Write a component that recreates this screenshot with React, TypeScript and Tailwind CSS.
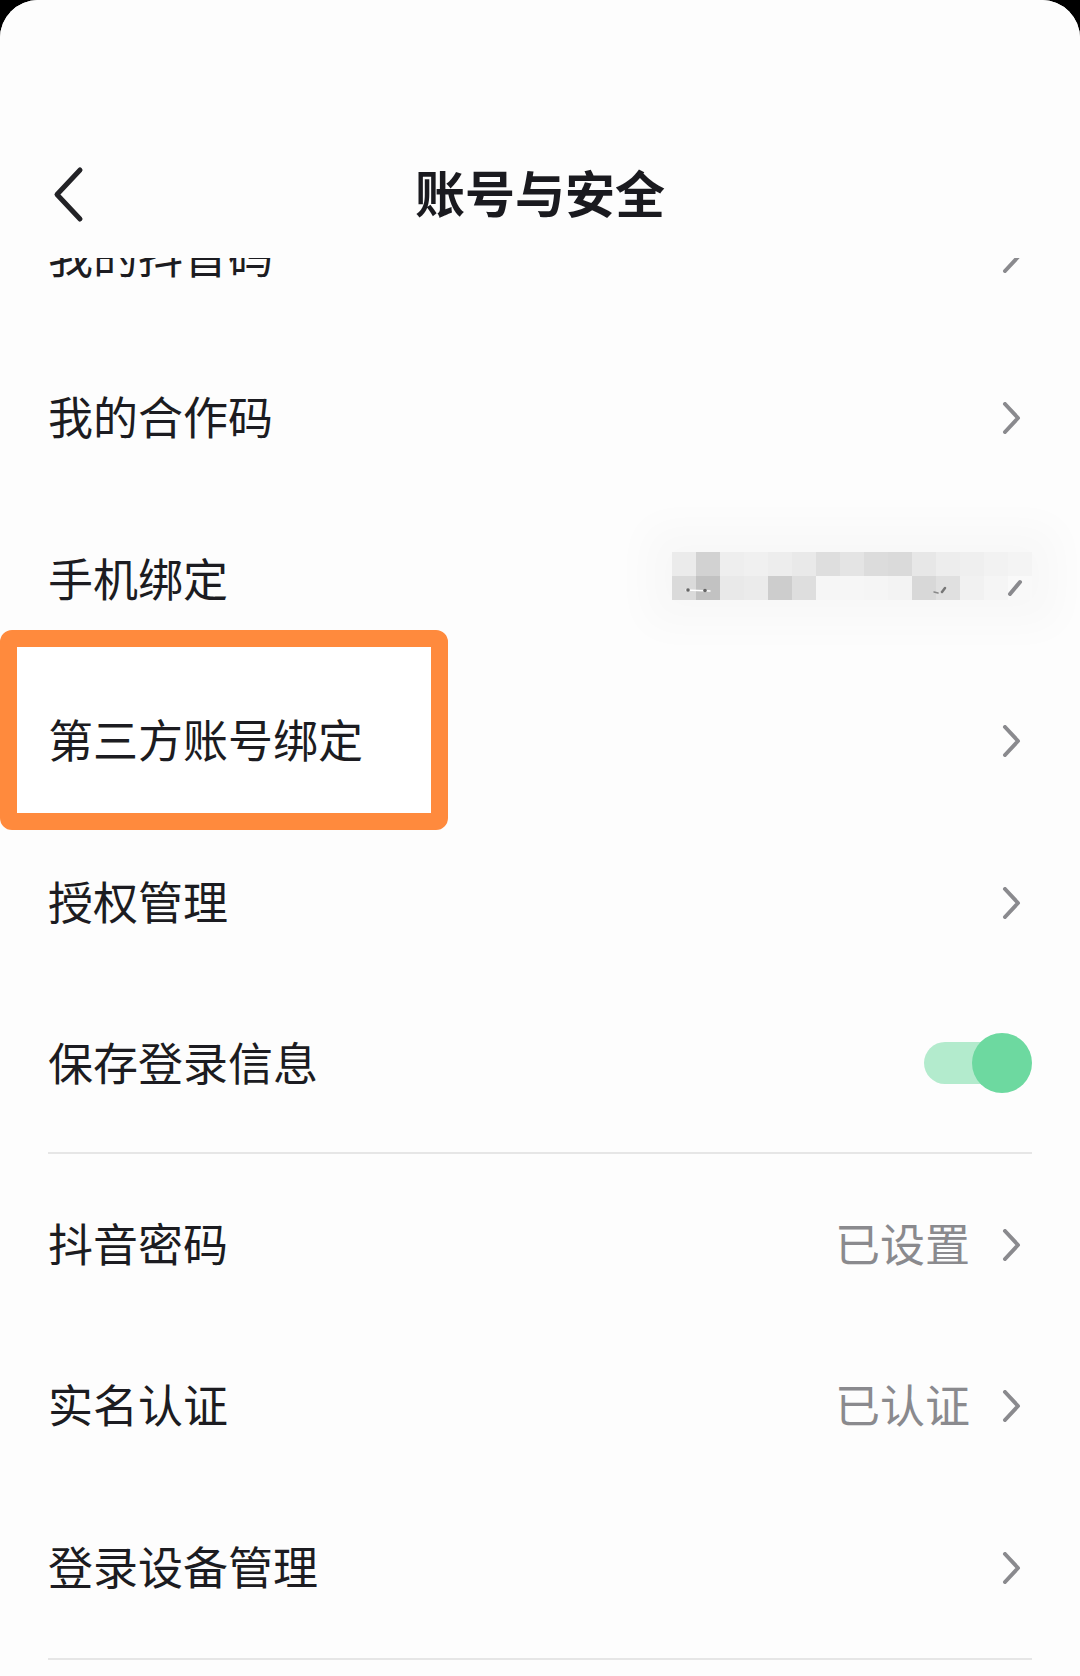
import React from "react";

const FONT = { fontFamily: '"Noto Sans CJK SC", "Noto Sans", sans-serif' };

function Chevron() {
  return (
    <svg width="24" height="32" viewBox="0 0 24 32" className="mr-[10px] shrink-0">
      <path d="M7 2 L20 16 L7 30" fill="none" stroke="#8a8a8e" strokeWidth="4" strokeLinecap="round" strokeLinejoin="round" />
    </svg>
  );
}

const mosaicTop = [
  "bg-[#ebebeb]", "bg-[#d2d2d2]", "bg-[#eeeeee]", "bg-[#f0f0f0]", "bg-[#ededed]",
  "bg-[#e9e9e9]", "bg-[#dedede]", "bg-[#e4e4e4]", "bg-[#dcdcdc]", "bg-[#dadada]",
  "bg-[#e7e7e7]", "bg-[#ededed]", "bg-[#efefef]", "bg-[#f2f2f2]", "bg-[#f4f4f4]",
];
const mosaicBottom = [
  "bg-[#dadada]", "bg-[#c2c2c2]", "bg-[#e9e9e9]", "bg-[#ebebeb]", "bg-[#cdcdcd]",
  "bg-[#dedede]", "bg-[#f6f6f6]", "bg-[#f6f6f6]", "bg-[#f5f5f5]", "bg-[#f3f3f3]",
  "bg-[#d8d8d8]", "bg-[#e0e0e0]", "bg-[#f1f1f1]", "bg-[#f5f5f5]", "bg-[#f9f9f9]",
];

function Mosaic() {
  return (
    <div className="relative mt-[-8px] shadow-[0_0_40px_26px_rgba(0,0,0,0.022)]">
      <div className="grid grid-cols-[repeat(15,24px)] grid-rows-[24px_24px]">
        {mosaicTop.map((c, i) => (
          <div key={"t" + i} className={c} />
        ))}
        {mosaicBottom.map((c, i) => (
          <div key={"b" + i} className={c} />
        ))}
      </div>
      <svg width="360" height="48" viewBox="0 0 360 48" className="absolute left-0 top-0">
        <path d="M338 42 L348 30" stroke="#8a8a8e" strokeWidth="4" strokeLinecap="round" />
        <path d="M270 40 L273 36" stroke="#777" strokeWidth="2.5" strokeLinecap="round" />
        <path d="M262 40 L266 41" stroke="#888" strokeWidth="1.5" strokeLinecap="round" />
        <path d="M14 38 L38 39" stroke="#ffffff" strokeWidth="1.5" strokeLinecap="round" />
        <circle cx="16" cy="38" r="1.8" fill="#666" />
        <circle cx="33" cy="38.5" r="1.8" fill="#666" />
      </svg>
    </div>
  );
}

function Toggle() {
  return (
    <div className="relative mt-[-3px] flex h-[60px] w-[108px] items-center">
      <div className="h-[42px] w-[90px] rounded-full bg-[#b3ebcd]" />
      <div className="ml-[-42px] h-[60px] w-[60px] rounded-full bg-[#6dd9a0]" />
    </div>
  );
}

type RowProps = { label: string; right?: React.ReactNode; chevron?: boolean; children?: React.ReactNode };

function Row({ label, right, chevron = true, children }: RowProps) {
  return (
    <div className="relative flex h-[161.5px] items-center justify-between pl-[48px] pr-[48px]">
      {children}
      <span className="relative mt-[-5px] text-[45px] leading-none text-[#1c1c21]">{label}</span>
      <div className="relative flex items-center">
        {right}
        {chevron && <Chevron />}
      </div>
    </div>
  );
}

export default function App() {
  return (
    <div className="h-[1676px] w-[1080px] overflow-hidden bg-black" style={FONT}>
      <div className="h-full w-full rounded-t-[38px] bg-[#fdfdfd]">
        <div className="relative z-10 h-[258px] rounded-t-[38px] bg-[#fdfdfd] pt-[155px]">
          <div className="grid h-[72px] grid-cols-[1fr_auto_1fr] items-center">
            <div className="pl-[50px] pt-[8px]">
              <svg width="36" height="58" viewBox="0 0 36 58">
                <path d="M30 4 L7 28.5 L30 53" fill="none" stroke="#222226" strokeWidth="5" strokeLinecap="round" strokeLinejoin="round" />
              </svg>
            </div>
            <h1 className="text-[50px] font-bold leading-none text-[#1a1a1f]">账号与安全</h1>
            <div />
          </div>
        </div>

        <div className="mt-[-82px]">
          <div className="pb-[7px]">
            <Row label="我的抖音码" />
            <Row label="我的合作码" />
            <Row label="手机绑定" chevron={false} right={<Mosaic />} />
            <Row label="第三方账号绑定">
              <div className="absolute left-0 top-[-31px] h-[200px] w-[448px] rounded-[12px] border-[17px] border-[#ff8a3d] bg-white" />
            </Row>
            <Row label="授权管理" />
            <Row label="保存登录信息" chevron={false} right={<Toggle />} />
          </div>
          <div className="mx-[48px] h-[2px] bg-[#e6e6e6]" />
          <div className="pt-[10px]">
            <Row label="抖音密码" right={<span className="mr-[28px] mt-[-5px] text-[45px] leading-none text-[#8a8a8e]">已设置</span>} />
            <Row label="实名认证" right={<span className="mr-[28px] mt-[-5px] text-[45px] leading-none text-[#8a8a8e]">已认证</span>} />
            <Row label="登录设备管理" />
          </div>
          <div className="mx-[48px] mt-[9px] h-[2px] bg-[#e6e6e6]" />
        </div>
      </div>
    </div>
  );
}
